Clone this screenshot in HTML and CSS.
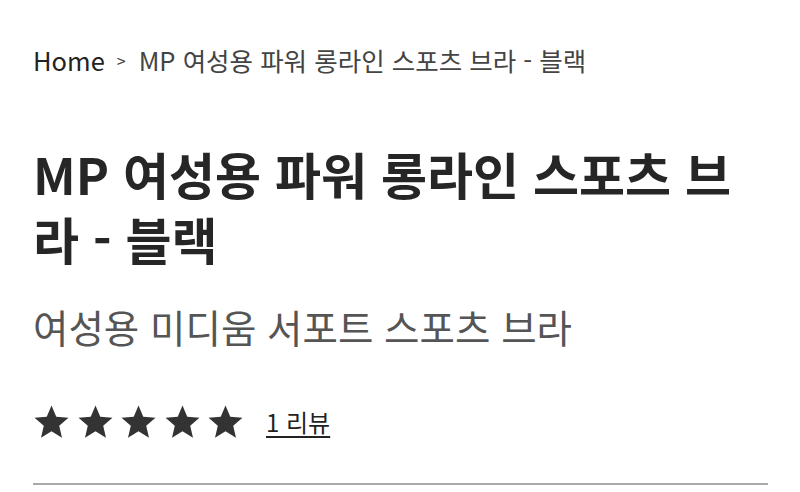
FILE: index.html
```html
<!DOCTYPE html>
<html lang="ko">
<head>
<meta charset="utf-8">
<link rel="stylesheet" href="styles.css">
</head>
<body>
<main class="page">
  <nav class="crumbs">
    <a class="crumb-home" href="#">Home</a>
    <span class="crumb-sep">&gt;</span>
    <span class="crumb-current">MP 여성용 파워 롱라인 스포츠 브라 - 블랙</span>
  </nav>
  <h1 class="title">MP 여성용 파워 롱라인 스포츠 브라 - 블랙</h1>
  <p class="subtitle">여성용 미디움 서포트 스포츠 브라</p>
  <div class="rating">
    <div class="stars">
      <svg class="star" viewBox="0 0 24 24"><path d="M12 1.6l3.1 7.3 7.9.7-6 5.2 1.8 7.7L12 18.4l-6.8 4.1 1.8-7.7-6-5.2 7.9-.7z"/></svg>
      <svg class="star" viewBox="0 0 24 24"><path d="M12 1.6l3.1 7.3 7.9.7-6 5.2 1.8 7.7L12 18.4l-6.8 4.1 1.8-7.7-6-5.2 7.9-.7z"/></svg>
      <svg class="star" viewBox="0 0 24 24"><path d="M12 1.6l3.1 7.3 7.9.7-6 5.2 1.8 7.7L12 18.4l-6.8 4.1 1.8-7.7-6-5.2 7.9-.7z"/></svg>
      <svg class="star" viewBox="0 0 24 24"><path d="M12 1.6l3.1 7.3 7.9.7-6 5.2 1.8 7.7L12 18.4l-6.8 4.1 1.8-7.7-6-5.2 7.9-.7z"/></svg>
      <svg class="star" viewBox="0 0 24 24"><path d="M12 1.6l3.1 7.3 7.9.7-6 5.2 1.8 7.7L12 18.4l-6.8 4.1 1.8-7.7-6-5.2 7.9-.7z"/></svg>
    </div>
    <a class="reviews" href="#">1 리뷰</a>
  </div>
  <hr class="divider">
</main>
</body>
</html>
```
FILE: styles.css
```css
html, body {
  margin: 0;
  padding: 0;
  background: #fff;
}
body {
  font-family: "Noto Sans CJK KR", "Noto Sans", sans-serif;
  color: #222;
}
.page {
  padding: 40px 32px 0 33px;
}
.crumbs {
  display: flex;
  align-items: center;
  font-size: 25.5px;
  line-height: 40px;
  color: #444;
}
.crumb-home {
  color: #222;
  text-decoration: none;
}
.crumb-sep {
  font-size: 16px;
  margin: 0 13px 0 12px;
  color: #444;
}
.title {
  margin: 61px 0 0 0;
  font-size: 50px;
  font-weight: 700;
  line-height: 65px;
  color: #262626;
}
.subtitle {
  margin: 30px 0 0 0;
  font-size: 38.5px;
  line-height: 50px;
  font-weight: 400;
  color: #555;
}
.rating {
  display: flex;
  align-items: center;
  margin-top: 52px;
}
.stars {
  display: flex;
  gap: 6.5px;
}
.star {
  width: 37px;
  height: 37px;
  fill: #333;
}
.reviews {
  margin-left: 22px;
  font-size: 24px;
  color: #222;
  text-decoration: underline;
  text-underline-offset: 4px;
}
.divider {
  margin: 43px 0 0 0;
  border: 0;
  border-top: 2px solid #aaa;
}
```
